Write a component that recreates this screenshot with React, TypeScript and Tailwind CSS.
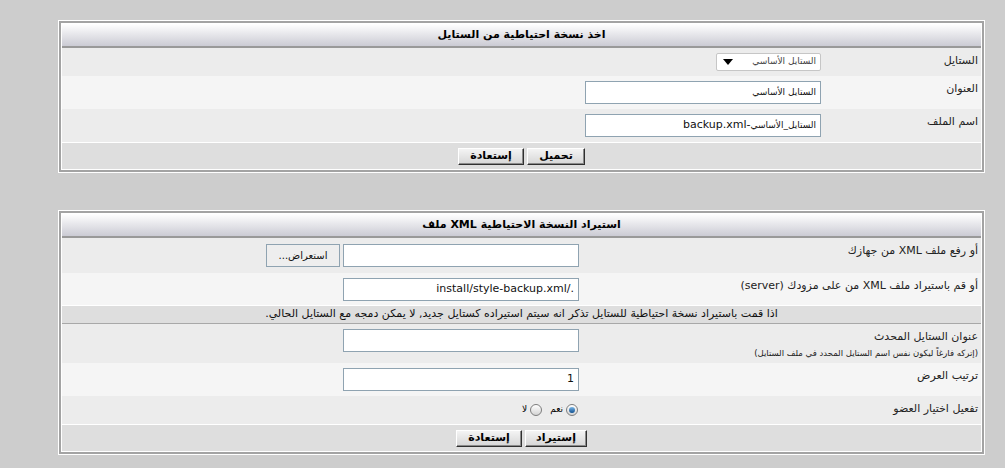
import * as React from "react";

const font = { fontFamily: '"DejaVu Sans", "Noto Sans", sans-serif' };

const Panel = ({ title, children, className = "" }) => {
  return (
    <div dir="rtl" className={`ml-[58px] w-[927px] border border-white ${className}`}>
      <div className="border-2 border-[#a3a3a3]">
        <div className="border border-white">
          <div className="h-[24px] flex items-center justify-center bg-gradient-to-b from-white to-[#cbcbd4] border-b-2 border-[#999] text-[11px] font-bold text-black">
            {title}
          </div>
          {children}
        </div>
      </div>
    </div>
  );
};

const Row = ({ label, sub = "", bg, h, labelW, children }) => {
  return (
    <div className={`flex ${bg} ${h}`}>
      <div className={`${labelW} shrink-0 pr-[3px] pt-[6px] text-[11px] leading-[13px] text-[#222]`}>
        <div>{label}</div>
        {sub && <div className="text-[8.5px] leading-[12px] mt-[4px]">{sub}</div>}
      </div>
      <div className="flex-1 flex items-center pr-[2px] gap-[3px]">{children}</div>
    </div>
  );
};

const Input = ({ value = "", w = "w-[236px]" }) => (
  <div className={`${w} h-[23px] border border-[#8fa3b1] bg-white flex items-center px-[4px] text-[11px] text-[#111] whitespace-nowrap overflow-hidden`}>
    {value}
  </div>
);

const Btn = ({ label, w }) => (
  <div className={`${w} h-[17px] flex items-center justify-center border border-t-white border-l-white border-b-[#303030] border-r-[#303030] bg-gradient-to-b from-[#f4f4f4] to-[#d6d6d6] shadow-[inset_-1px_-1px_0_#8a8a8a] text-[11px] font-bold text-black`}>
    {label}
  </div>
);

const Footer = ({ children }) => (
  <div className="h-[27px] border-t border-white bg-[#dedede] flex items-center justify-center gap-[3px]">
    {children}
  </div>
);

const Radio = ({ checked = false }) => (
  <span className="w-[12px] h-[12px] rounded-full border border-[#7d7d7d] bg-gradient-to-b from-white to-[#d4d4d4] flex items-center justify-center">
    {checked && <span className="w-[6px] h-[6px] rounded-full bg-gradient-to-b from-[#7ab8e8] to-[#0a4f8f]"></span>}
  </span>
);

export default function App() {
  return (
    <div style={font} className="min-h-[468px] bg-[#cdcdcd] pt-[20px] pb-[10px]">
      <Panel title="اخذ نسخة احتياطية من الستايل">
        <Row label="الستايل" bg="bg-[#ececec]" h="h-[28px]" labelW="w-[158px]">
          <div className="w-[105px] h-[18px] border border-[#c6c6c6] rounded-[2px] bg-white flex items-center justify-between pr-[4px] pl-[6px]">
            <span className="text-[9px] text-[#444]">الستايل الأساسي</span>
            <span className="w-0 h-0 border-l-[5px] border-r-[5px] border-t-[6px] border-l-transparent border-r-transparent border-t-black"></span>
          </div>
        </Row>
        <Row label="العنوان" bg="bg-[#f5f5f5]" h="h-[33px]" labelW="w-[158px]">
          <Input value={<span className="text-[9px]">الستايل الأساسي</span>} />
        </Row>
        <Row label="اسم الملف" bg="bg-[#ececec]" h="h-[33px]" labelW="w-[158px]">
          <Input value={<><span className="text-[9px]">الستايل_الأساسي</span>-backup.xml</>} />
        </Row>
        <Footer>
          <Btn label="تحميل" w="w-[58px]" />
          <Btn label="إستعادة" w="w-[66px]" />
        </Footer>
      </Panel>

      <Panel title="استيراد النسخة الاحتياطية XML ملف" className="mt-[37px]">
        <Row label="أو رفع ملف XML من جهازك" bg="bg-[#ececec]" h="h-[35px]" labelW="w-[400px]">
          <Input />
          <div dir="ltr" className="w-[74px] h-[23px] border border-[#8fa3b1] bg-[#eeeeee] flex items-center justify-center text-[10px] text-[#111]">
            ...استعراض
          </div>
        </Row>
        <Row label="أو قم باستيراد ملف XML من على مزودك (server)" bg="bg-[#f5f5f5]" h="h-[32px]" labelW="w-[400px]">
          <Input value="./install/style-backup.xml" />
        </Row>
        <div className="h-[19px] border-t border-white border-b border-b-[#a8a8a8] bg-[#dedede] flex items-center justify-center text-[11px] text-[#111]">
          اذا قمت باستيراد نسخة احتياطية للستايل تذكر انه سيتم استيراده كستايل جديد, لا يمكن دمجه مع الستايل الحالي.
        </div>
        <Row
          label="عنوان الستايل المحدث"
          sub="(إتركه فارغاً ليكون نفس اسم الستايل المحدد في ملف الستايل)"
          bg="bg-[#ececec]"
          h="h-[39px]"
          labelW="w-[400px]"
        >
          <div className="self-start mt-[5px]">
            <Input />
          </div>
        </Row>
        <Row label="ترتيب العرض" bg="bg-[#f5f5f5]" h="h-[33px]" labelW="w-[400px]">
          <Input value="1" />
        </Row>
        <Row label="تفعيل اختيار العضو" bg="bg-[#ececec]" h="h-[28px]" labelW="w-[400px]">
          <div className="flex items-center gap-[3px] text-[9px] pr-[1px]">
            <Radio checked />
            <span>نعم</span>
            <span className="w-[2px]"></span>
            <Radio />
            <span>لا</span>
          </div>
        </Row>
        <Footer>
          <Btn label="إستيراد" w="w-[62px]" />
          <Btn label="إستعادة" w="w-[66px]" />
        </Footer>
      </Panel>
    </div>
  );
}
